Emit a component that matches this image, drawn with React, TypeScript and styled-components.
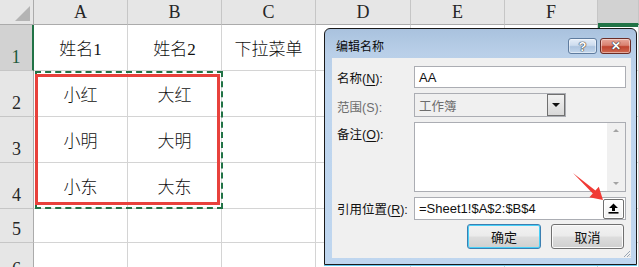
import { Fragment } from "react";
import styled, { createGlobalStyle } from "styled-components";

const GlobalStyle = createGlobalStyle`
html, body {
  margin: 0;
  padding: 0;
  width: 639px;
  height: 267px;
  overflow: hidden;
  background: #ffffff;
}
* { box-sizing: border-box; }
`

const CJK = `"Noto Sans CJK SC", sans-serif`;
const UI = `"Liberation Sans", "Noto Sans CJK SC", sans-serif`;

const Page = styled.div`
position: relative;
width: 639px;
height: 267px;
overflow: hidden;
`

const Sheet = styled.div`
display: grid;
grid-template-columns: 34px 94px 94px 94px 95px 94px 93px 1fr;
grid-template-rows: 25px 46px 46px 46px 46px 34px 40px;
`

const Corner = styled.div`
position: relative;
background: #e6e6e6;
border-right: 1px solid #ababab;
border-bottom: 1px solid #ababab;
&::after {
  content: "";
  position: absolute;
  right: 3px;
  bottom: 3px;
  border-left: 15px solid transparent;
  border-bottom: 15px solid #b4b4b4;
}
`

const ColHead = styled.div<{ $selected?: boolean }>`
display: flex;
align-items: center;
justify-content: center;
background: ${p => p.$selected ? "#d2d2d2" : "#e6e6e6"};
border-right: 1px solid #c6c6c6;
border-bottom: ${p => p.$selected ? "2px solid #217346" : "1px solid #ababab"};
font-family: "Liberation Serif", serif;
font-size: 18px;
color: #262626;
padding-top: ${p => p.$selected ? "2px" : "0"};
`

const RowHead = styled.div<{ $selected?: boolean }>`
display: flex;
align-items: flex-end;
justify-content: center;
padding-bottom: 2px;
background: ${p => p.$selected ? "#d2d2d2" : "#e6e6e6"};
border-right: ${p => p.$selected ? "2px solid #217346" : "1px solid #ababab"};
border-bottom: 1px solid #c6c6c6;
font-family: "Liberation Serif", serif;
font-size: 18px;
color: ${p => p.$selected ? "#1d5a3b" : "#262626"};
`

const Cell = styled.div<{ $active?: boolean }>`
display: flex;
align-items: center;
justify-content: center;
border-right: 1px solid #d4d4d4;
border-bottom: 1px solid #d4d4d4;
font-family: "Liberation Serif", ${CJK};
font-size: 17px;
font-weight: 300;
color: #111;
box-shadow: ${p => p.$active ? "inset 2px 2px 0 #217346" : "none"};
`

const DashedRange = styled.div`
position: absolute;
left: 35px;
top: 71px;
width: 188px;
height: 138px;
border: 2px dashed #217346;
`

const RedBox = styled.div`
position: absolute;
left: 35px;
top: 74px;
width: 185px;
height: 131px;
border: 3px solid #e8413c;
`

const Dialog = styled.div`
position: absolute;
left: 324px;
top: 28px;
width: 313px;
height: 237px;
border: 1px solid #1a1a1a;
border-radius: 6px 6px 0 0;
background: linear-gradient(#a9c2de 0, #b9cfe8 24px, #bed5ee 60px, #bfd6ef 100%);
box-shadow: 0 1px 0 #63c6ee;
display: flex;
flex-direction: column;
padding: 0 5px 6px 7px;
`

const TitleBar = styled.div`
height: 29px;
display: flex;
align-items: flex-start;
justify-content: space-between;
padding-left: 4px;
`

const Title = styled.div`
font-family: ${CJK};
font-size: 12px;
line-height: 12px;
padding-top: 11px;
color: #0b0b0b;
`

const TitleButtons = styled.div`
display: flex;
gap: 3px;
padding-top: 9px;
`

const CaptionButton = styled.div<{ $close?: boolean }>`
width: ${p => p.$close ? "31px" : "29px"};
height: 16px;
border-radius: 3px;
border: 1px solid ${p => p.$close ? "#6b2d27" : "#5f7c9f"};
background: ${p => p.$close
  ? "linear-gradient(#e9a99c 0, #d98170 45%, #c0442f 55%, #cf6a52 100%)"
  : "linear-gradient(#e6eef8 0, #cddcee 45%, #adc4df 55%, #c4d7ec 100%)"};
display: flex;
align-items: center;
justify-content: center;
font-family: "Liberation Sans", sans-serif;
font-weight: bold;
font-size: ${p => p.$close ? "12px" : "13px"};
color: #fff;
text-shadow: 0 0 1px #333, 0 0 1px #333, 0 0 1px #333;
box-shadow: inset 0 0 0 1px rgba(255,255,255,0.45);
`

const Client = styled.div`
flex: 1;
background: #f0f0f0;
display: flex;
flex-direction: column;
padding: 8px 5px 0 5px;
position: relative;
`

const FieldRow = styled.div<{ $h: number; $mb: number; $top?: boolean }>`
height: ${p => p.$h}px;
margin-bottom: ${p => p.$mb}px;
display: flex;
align-items: ${p => p.$top ? "flex-start" : "center"};
`

const Label = styled.div<{ $disabled?: boolean; $pad?: number }>`
width: 77px;
flex: none;
font-family: ${UI};
font-size: 12.5px;
color: ${p => p.$disabled ? "#6d6d6d" : "#111"};
padding-top: ${p => p.$pad ?? (p.$disabled ? 2 : 0)}px;
& u { text-decoration: underline; text-underline-offset: 2px; }
`

const TextBox = styled.div<{ $w?: number }>`
height: 100%;
width: ${p => p.$w ? `${p.$w}px` : "auto"};
flex: ${p => p.$w ? "none" : "1"};
border: 1px solid #abadb3;
background: #fff;
display: flex;
align-items: center;
padding-left: 4px;
font-family: ${UI};
font-size: 13px;
color: #111;
position: relative;
`

const Combo = styled(TextBox)`
background: #f0f0f0;
color: #6d6d6d;
padding-right: 0;
justify-content: space-between;
font-family: ${CJK};
font-size: 12.5px;
`

const DropButton = styled.div`
width: 18px;
height: 22px;
border: 1px solid #707070;
background: linear-gradient(#f2f2f2, #d8d8d8);
display: flex;
align-items: center;
justify-content: center;
&::after {
  content: "";
  border-left: 4px solid transparent;
  border-right: 4px solid transparent;
  border-top: 4px solid #111;
}
`

const Memo = styled(TextBox)`
align-items: stretch;
justify-content: flex-end;
padding: 0;
`

const ScrollBar = styled.div`
width: 18px;
background: #f0f0f0;
display: flex;
flex-direction: column;
justify-content: space-between;
align-items: center;
padding: 6px 0 6px;
`

const ScrollArrow = styled.div<{ $down?: boolean }>`
border-left: 3px solid transparent;
border-right: 3px solid transparent;
${p => p.$down ? "border-top: 3px solid #a3a3a3;" : "border-bottom: 3px solid #a3a3a3;"}
`

const RefBox = styled(TextBox)`
justify-content: space-between;
padding-right: 1px;
`

const CollapseButton = styled.div`
width: 21px;
height: 20px;
border: 1px solid #707070;
border-radius: 2px;
background: linear-gradient(#ffffff, #f0f0f0);
box-shadow: inset 0 0 0 1px #fff;
display: flex;
align-items: center;
justify-content: center;
`

const ButtonRow = styled.div`
display: flex;
justify-content: flex-end;
gap: 10px;
padding-right: 2px;
`

const DlgButton = styled.div<{ $default?: boolean }>`
width: ${p => p.$default ? "74px" : "73px"};
height: 25px;
border-radius: 3px;
border: 1px solid ${p => p.$default ? "#3c7fb1" : "#707070"};
background: linear-gradient(#f2f2f2 0, #ebebeb 48%, #dddddd 52%, #cfcfcf 100%);
box-shadow: inset 0 0 0 1px ${p => p.$default ? "#48d0f8" : "#fbfbfb"};
display: flex;
align-items: center;
justify-content: center;
font-family: ${CJK};
font-size: 13px;
color: #111;
`

const Grip = styled.svg`
position: absolute;
right: 0;
bottom: 0;
`

const Arrow = styled.svg`
position: absolute;
left: 565px;
top: 165px;
`

const cols = ["A", "B", "C", "D", "E", "F", ""];
const rows: string[][] = [
  ["姓名1", "姓名2", "下拉菜单"],
  ["小红", "大红"],
  ["小明", "大明"],
  ["小东", "大东"],
  [],
  [],
];

export default function App() {
  return (
    <Page>
      <GlobalStyle />
      <Sheet>
        <Corner />
        {cols.map((c, i) => <ColHead key={i} $selected={c === ""}>{c}</ColHead>)}
        {rows.map((r, ri) => (
          <Fragment key={ri}>
            <RowHead $selected={ri === 0}>{ri + 1}</RowHead>
            {cols.map((_, ci) => (
              <Cell key={ci} $active={ri === 0 && ci === 6}>{r[ci] ?? ""}</Cell>
            ))}
          </Fragment>
        ))}
      </Sheet>
      <DashedRange />
      <RedBox />

      <Dialog>
        <TitleBar>
          <Title>编辑名称</Title>
          <TitleButtons>
            <CaptionButton>?</CaptionButton>
            <CaptionButton $close>✕</CaptionButton>
          </TitleButtons>
        </TitleBar>
        <Client>
          <FieldRow $h={22} $mb={5}>
            <Label>名称(<u>N</u>):</Label>
            <TextBox>AA</TextBox>
          </FieldRow>
          <FieldRow $h={24} $mb={5}>
            <Label $disabled>范围(S):</Label>
            <Combo $w={152}>
              工作簿
              <DropButton />
            </Combo>
          </FieldRow>
          <FieldRow $h={70} $mb={5} $top>
            <Label $pad={2}>备注(<u>O</u>):</Label>
            <Memo>
              <ScrollBar>
                <ScrollArrow />
                <ScrollArrow $down />
              </ScrollBar>
            </Memo>
          </FieldRow>
          <FieldRow $h={23} $mb={4}>
            <Label>引用位置(<u>R</u>):</Label>
            <RefBox>
              =Sheet1!$A$2:$B$4
              <CollapseButton>
                <svg width="11" height="11" viewBox="0 0 11 11">
                  <polygon points="5.5,0.5 10,5 7,5 7,8 4,8 4,5 1,5" fill="#000" />
                  <rect x="0.5" y="9" width="10" height="1.6" fill="#000" />
                </svg>
              </CollapseButton>
            </RefBox>
          </FieldRow>
          <ButtonRow>
            <DlgButton $default>确定</DlgButton>
            <DlgButton>取消</DlgButton>
          </ButtonRow>
          <Grip width="8" height="8" viewBox="0 0 8 8">
            <path d="M7 1 L1 7 M7 4 L4 7 M7 6.5 L6.5 7" stroke="#9aa6b4" strokeWidth="1" />
          </Grip>
        </Client>
      </Dialog>

      <Arrow width="45" height="40" viewBox="0 0 45 40">
        <polygon
          points="8,8 30.4,25.5 33.8,21.8 38,35 24.4,32.2 27.8,28.5"
          fill="#f03a35"
        />
      </Arrow>
    </Page>
  );
}
